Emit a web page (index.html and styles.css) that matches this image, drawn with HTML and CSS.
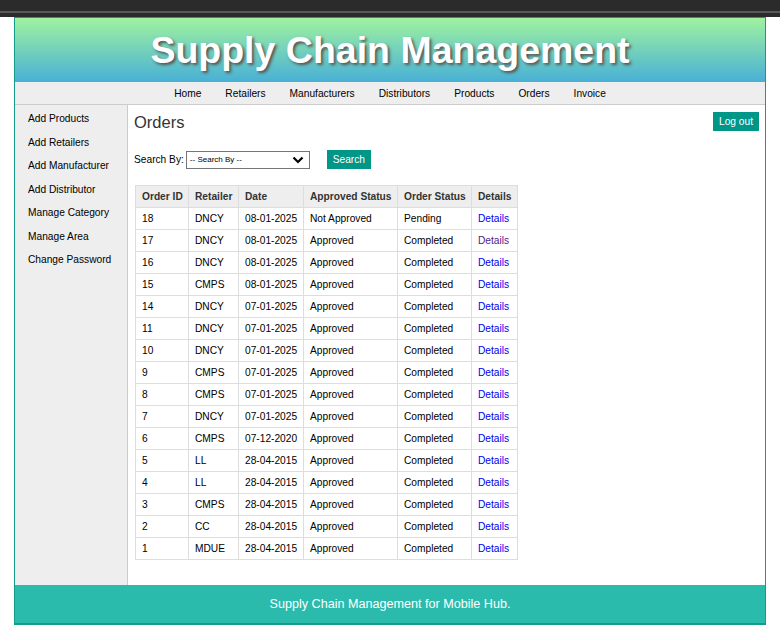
FILE: index.html
```html
<!DOCTYPE html>
<html>
<head>
<meta charset="utf-8">
<title>Orders</title>
<link rel="stylesheet" href="styles.css">
</head>
<body>
<div class="chrome"><div class="chrome-line"></div></div>
<div class="page">
  <header class="banner"><h1>Supply Chain Management</h1></header>
  <nav class="topnav">
    <a href="#">Home</a>
    <a href="#">Retailers</a>
    <a href="#">Manufacturers</a>
    <a href="#">Distributors</a>
    <a href="#">Products</a>
    <a href="#">Orders</a>
    <a href="#">Invoice</a>
  </nav>
  <div class="body">
    <aside class="sidebar">
      <a href="#">Add Products</a>
      <a href="#">Add Retailers</a>
      <a href="#">Add Manufacturer</a>
      <a href="#">Add Distributor</a>
      <a href="#">Manage Category</a>
      <a href="#">Manage Area</a>
      <a href="#">Change Password</a>
    </aside>
    <main class="main">
      <div class="title-row">
        <h2>Orders</h2>
        <button class="btn logout">Log out</button>
      </div>
      <form class="search-row">
        <label>Search By:</label>
        <div class="select-wrap">
          <select><option>-- Search By --</option></select>
          <svg class="chev" width="12" height="8" viewBox="0 0 12 8"><path d="M1.5 1.5 L6 6 L10.5 1.5" fill="none" stroke="#000" stroke-width="2.2"/></svg>
        </div>
        <button type="button" class="btn search">Search</button>
      </form>
      <table class="orders">
        <colgroup><col class="c1"><col class="c2"><col class="c3"><col class="c4"><col class="c5"><col class="c6"></colgroup>
        <thead>
          <tr><th>Order ID</th><th>Retailer</th><th>Date</th><th>Approved Status</th><th>Order Status</th><th>Details</th></tr>
        </thead>
        <tbody>
          <tr><td>18</td><td>DNCY</td><td>08-01-2025</td><td>Not Approved</td><td>Pending</td><td><a href="#">Details</a></td></tr>
          <tr><td>17</td><td>DNCY</td><td>08-01-2025</td><td>Approved</td><td>Completed</td><td><a class="visited" href="#">Details</a></td></tr>
          <tr><td>16</td><td>DNCY</td><td>08-01-2025</td><td>Approved</td><td>Completed</td><td><a href="#">Details</a></td></tr>
          <tr><td>15</td><td>CMPS</td><td>08-01-2025</td><td>Approved</td><td>Completed</td><td><a href="#">Details</a></td></tr>
          <tr><td>14</td><td>DNCY</td><td>07-01-2025</td><td>Approved</td><td>Completed</td><td><a href="#">Details</a></td></tr>
          <tr><td>11</td><td>DNCY</td><td>07-01-2025</td><td>Approved</td><td>Completed</td><td><a href="#">Details</a></td></tr>
          <tr><td>10</td><td>DNCY</td><td>07-01-2025</td><td>Approved</td><td>Completed</td><td><a href="#">Details</a></td></tr>
          <tr><td>9</td><td>CMPS</td><td>07-01-2025</td><td>Approved</td><td>Completed</td><td><a href="#">Details</a></td></tr>
          <tr><td>8</td><td>CMPS</td><td>07-01-2025</td><td>Approved</td><td>Completed</td><td><a href="#">Details</a></td></tr>
          <tr><td>7</td><td>DNCY</td><td>07-01-2025</td><td>Approved</td><td>Completed</td><td><a href="#">Details</a></td></tr>
          <tr><td>6</td><td>CMPS</td><td>07-12-2020</td><td>Approved</td><td>Completed</td><td><a href="#">Details</a></td></tr>
          <tr><td>5</td><td>LL</td><td>28-04-2015</td><td>Approved</td><td>Completed</td><td><a href="#">Details</a></td></tr>
          <tr><td>4</td><td>LL</td><td>28-04-2015</td><td>Approved</td><td>Completed</td><td><a href="#">Details</a></td></tr>
          <tr><td>3</td><td>CMPS</td><td>28-04-2015</td><td>Approved</td><td>Completed</td><td><a href="#">Details</a></td></tr>
          <tr><td>2</td><td>CC</td><td>28-04-2015</td><td>Approved</td><td>Completed</td><td><a href="#">Details</a></td></tr>
          <tr><td>1</td><td>MDUE</td><td>28-04-2015</td><td>Approved</td><td>Completed</td><td><a href="#">Details</a></td></tr>
        </tbody>
      </table>
    </main>
  </div>
  <footer class="footer">Supply Chain Management for Mobile Hub.</footer>
</div>
</body>
</html>
```

FILE: styles.css
```css
* { box-sizing: border-box; }
html, body { margin: 0; padding: 0; background: #fff; }
body { font-family: "Liberation Sans", Arial, sans-serif; font-size: 10.2px; color: #000; }

.chrome { height: 17px; background: #2b2b2b; padding-top: 11px; }
.chrome-line { height: 2px; background: #595959; }

.page {
  margin-left: 14px;
  width: 752px;
  border-left: 1px solid #149b89;
  border-right: 1px solid #149b89;
}

.banner {
  height: 65px;
  background: linear-gradient(to bottom, #a0f2a0 0%, #48b0d6 100%);
  border-top: 1px solid #149b89;
  display: flex;
  align-items: center;
  justify-content: center;
}
.banner h1 {
  margin: 0;
  padding-top: 1px;
  font-size: 37.5px;
  font-weight: bold;
  color: #fff;
  text-shadow: 2px 2px 3px #555;
}

.topnav {
  height: 23px;
  background: #eeeeee;
  border-bottom: 1px solid #cccccc;
  display: flex;
  justify-content: center;
  align-items: center;
  gap: 24px;
}
.topnav a { color: #000; text-decoration: none; }

.body { display: flex; }

.sidebar {
  width: 113px;
  background: #eeeeee;
  border-right: 1px solid #cccccc;
  padding: 7px 0 0 13px;
  display: flex;
  flex-direction: column;
}
.sidebar a {
  color: #000;
  text-decoration: none;
  line-height: 13px;
  margin-bottom: 10.5px;
}

.main {
  flex: 1;
  padding: 6px 6px 25px 6px;
}

.title-row {
  display: flex;
  justify-content: space-between;
  align-items: flex-start;
}
.title-row h2 {
  margin: 0;
  font-size: 16.5px;
  font-weight: normal;
  color: #333;
  line-height: 20px;
  padding-top: 1px;
}

.btn {
  border: none;
  background: #009688;
  color: #fff;
  font-family: "Liberation Sans", Arial, sans-serif;
  font-size: 10.2px;
  padding: 0;
  height: 19px;
}
.logout { width: 46px; margin-top: 1px; }

.search-row {
  display: flex;
  align-items: center;
  margin: 18px 0 0 0;
  height: 19px;
}
.search-row label { margin-right: 2px; }
.select-wrap { position: relative; width: 124px; height: 18px; }
.select-wrap select {
  appearance: none;
  -webkit-appearance: none;
  width: 124px;
  height: 18px;
  border: 1px solid #767676;
  border-radius: 0;
  background: #fff;
  font-family: "Liberation Sans", Arial, sans-serif;
  font-size: 8px;
  color: #000;
  padding: 0 0 0 3px;
  margin: 0;
}
.chev { position: absolute; right: 6px; top: 5px; }
.search { width: 44px; margin-left: 17px; }

.orders {
  margin-top: 16px;
  margin-left: 1px;
  border-collapse: collapse;
  table-layout: fixed;
  width: 382px;
}
.c1 { width: 53px; }
.c2 { width: 50px; }
.c3 { width: 65px; }
.c4 { width: 94px; }
.c5 { width: 74px; }
.c6 { width: 46px; }
.orders th, .orders td {
  border: 1px solid #dddddd;
  padding: 4px 6px 4px 6px;
  height: 22px;
  line-height: 13px;
  text-align: left;
  white-space: nowrap;
  font-size: 10.2px;
}
.orders th { background: #eeeeee; font-weight: bold; color: #333; }
.orders td { color: #000; }
.orders a { color: #0000ee; text-decoration: none; }
.orders a.visited { color: #551a8b; }

.footer {
  height: 40px;
  background: #2bbbad;
  border-bottom: 2px solid #149b89;
  color: #fff;
  font-size: 12.6px;
  display: flex;
  align-items: center;
  justify-content: center;
}
```
